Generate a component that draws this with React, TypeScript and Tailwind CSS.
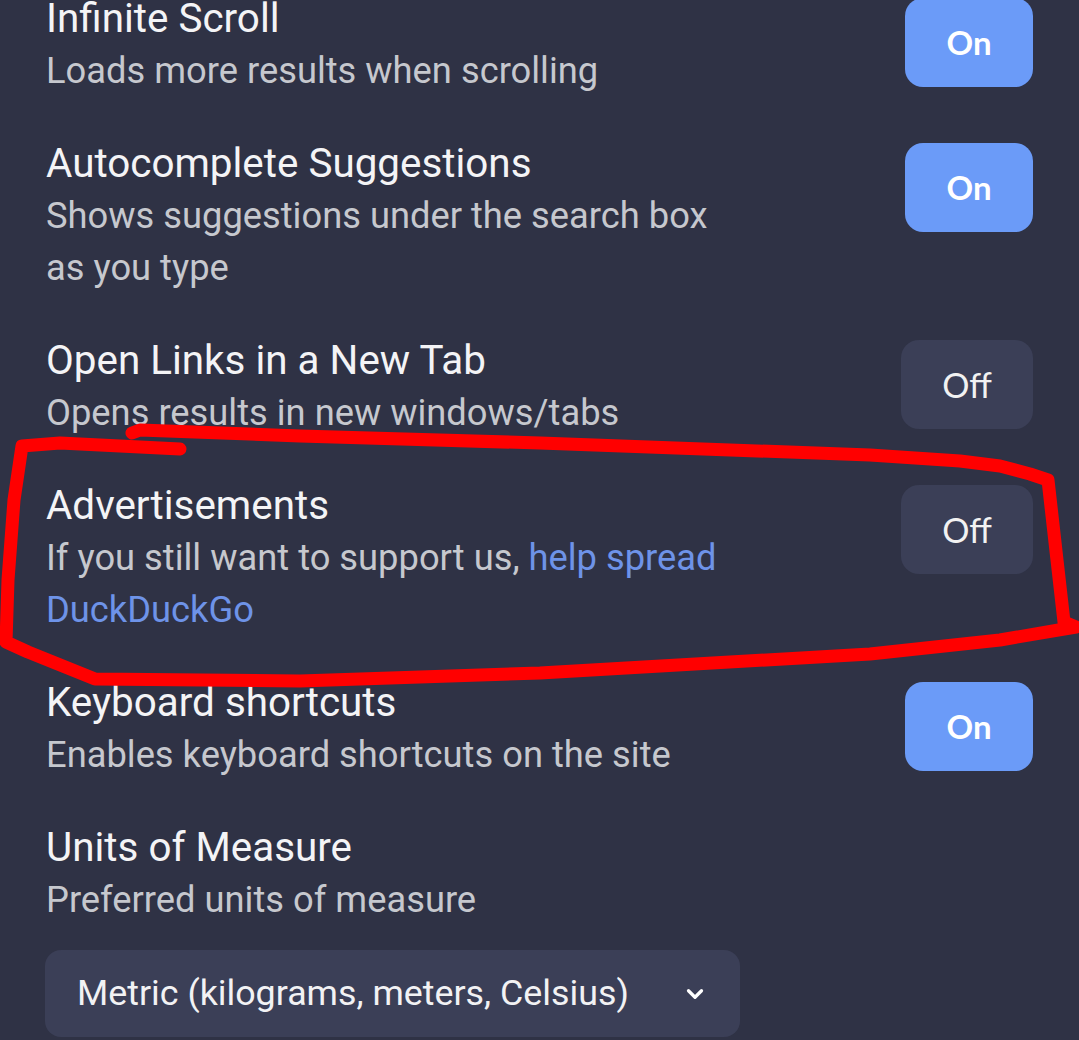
import { ChevronDown } from 'lucide-react';

type Row = {
  title: string;
  desc: React.ReactNode;
  on?: boolean;
};

const rows: Row[] = [
  { title: 'Infinite Scroll', desc: 'Loads more results when scrolling', on: true },
  {
    title: 'Autocomplete Suggestions',
    desc: (
      <>
        Shows suggestions under the search box
        <br />
        as you type
      </>
    ),
    on: true,
  },
  { title: 'Open Links in a New Tab', desc: 'Opens results in new windows/tabs', on: false },
  {
    title: 'Advertisements',
    desc: (
      <>
        If you still want to support us, <span className="text-[#6e93e8]">help spread</span>
        <br />
        <span className="text-[#6e93e8]">DuckDuckGo</span>
      </>
    ),
    on: false,
  },
  { title: 'Keyboard shortcuts', desc: 'Enables keyboard shortcuts on the site', on: true },
];

const Toggle = ({ on }: { on: boolean }) =>
  on ? (
    <button className="mt-[5px] w-[128px] h-[89px] shrink-0 rounded-[18px] bg-[#6b9bf8] text-white text-[33px] font-bold font-['Lato',sans-serif]">
      On
    </button>
  ) : (
    <button className="mt-[5px] w-[132px] h-[89px] shrink-0 rounded-[18px] bg-[#3b3f57] text-[#f2f2f2] text-[34px] font-['Lato',sans-serif]">
      Off
    </button>
  );

const SettingText = ({ title, desc }: { title: string; desc: React.ReactNode }) => (
  <div className="flex-1">
    <div className="text-[40.4px] leading-[52px] text-[#f4f4f6]">{title}</div>
    <div className="text-[36.3px] leading-[52px] text-[#c6c8ce]">{desc}</div>
  </div>
);

export default function App() {
  return (
    <div className="relative h-[1040px] overflow-hidden bg-[#2f3245] font-['Roboto',sans-serif]">
      <div className="flex flex-col gap-[41px] px-[46px] -mt-[7px]">
        {rows.map((r) => (
          <div key={r.title} className="flex items-start justify-between">
            <SettingText title={r.title} desc={r.desc} />
            <Toggle on={!!r.on} />
          </div>
        ))}
        <div>
          <SettingText title="Units of Measure" desc="Preferred units of measure" />
          <div className="mt-[24px] w-[695px] h-[87px] -ml-px rounded-[16px] bg-[#3b3f57] flex items-center justify-between pl-[32px] pr-[32px]">
            <span className="text-[35.8px] text-[#f2f2f4]">Metric (kilograms, meters, Celsius)</span>
            <ChevronDown className="w-[26px] h-[26px] text-white" strokeWidth={3} />
          </div>
        </div>
      </div>

      {/* hand-drawn annotation */}
      <svg
        className="pointer-events-none absolute left-0 top-0"
        width={1079}
        height={1040}
        viewBox="0 0 1079 1040"
      >
        <path
          d="M 180 449 L 60 443 L 22 446 L 14 500 L 8 580 L 6 642 L 28 652 L 95 679 L 300 681 L 540 673 L 870 654 L 1000 640 L 1076 627 L 1064 622 L 1057 560 L 1048 480 L 1030 474 L 1000 466 L 960 461 L 870 455 L 540 443 L 300 436 L 140 430 L 132 433"
          fill="none"
          stroke="#ff0000"
          strokeWidth={13}
          strokeLinecap="round"
          strokeLinejoin="round"
        />
      </svg>
    </div>
  );
}
